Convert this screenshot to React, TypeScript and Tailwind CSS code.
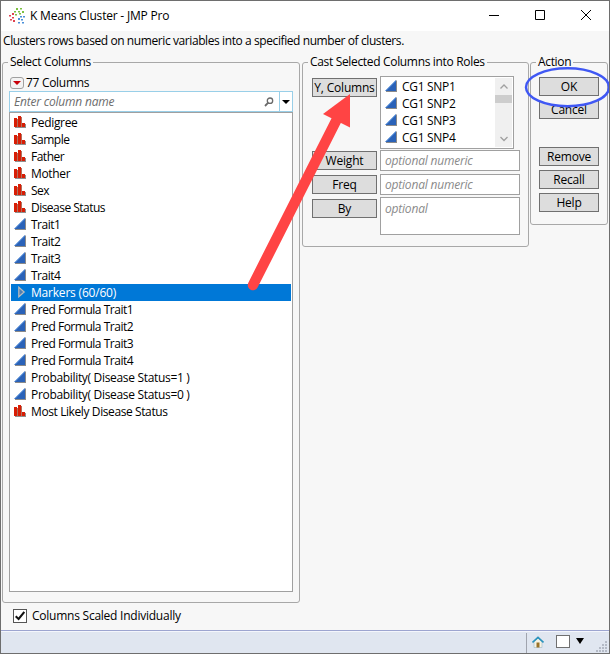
import { useState, ReactNode } from 'react';

type ColumnKind = 'nominal' | 'continuous' | 'group';

const columns: { name: string; kind: ColumnKind; spacing: string }[] = [
  { name: 'Pedigree', kind: 'nominal', spacing: 'tracking-[-0.35px]' },
  { name: 'Sample', kind: 'nominal', spacing: 'tracking-[-0.5px]' },
  { name: 'Father', kind: 'nominal', spacing: 'tracking-[-0.5px]' },
  { name: 'Mother', kind: 'nominal', spacing: 'tracking-[-0.35px]' },
  { name: 'Sex', kind: 'nominal', spacing: 'tracking-[-0.5px]' },
  { name: 'Disease Status', kind: 'nominal', spacing: 'tracking-[-0.53px]' },
  { name: 'Trait1', kind: 'continuous', spacing: 'tracking-[-0.5px]' },
  { name: 'Trait2', kind: 'continuous', spacing: 'tracking-[-0.5px]' },
  { name: 'Trait3', kind: 'continuous', spacing: 'tracking-[-0.5px]' },
  { name: 'Trait4', kind: 'continuous', spacing: 'tracking-[-0.5px]' },
  { name: 'Markers (60/60)', kind: 'group', spacing: 'tracking-[-0.2px]' },
  { name: 'Pred Formula Trait1', kind: 'continuous', spacing: 'tracking-[-0.48px]' },
  { name: 'Pred Formula Trait2', kind: 'continuous', spacing: 'tracking-[-0.48px]' },
  { name: 'Pred Formula Trait3', kind: 'continuous', spacing: 'tracking-[-0.48px]' },
  { name: 'Pred Formula Trait4', kind: 'continuous', spacing: 'tracking-[-0.48px]' },
  { name: 'Probability( Disease Status=1 )', kind: 'continuous', spacing: 'tracking-[-0.32px]' },
  { name: 'Probability( Disease Status=0 )', kind: 'continuous', spacing: 'tracking-[-0.32px]' },
  { name: 'Most Likely Disease Status', kind: 'nominal', spacing: 'tracking-[-0.4px]' },
];

const castColumns = ['CG1 SNP1', 'CG1 SNP2', 'CG1 SNP3', 'CG1 SNP4'];

function KindIcon({ kind }: { kind: ColumnKind }) {
  if (kind === 'nominal') {
    return (
      <svg className="w-3 h-3 mb-px shrink-0" viewBox="0 0 12 12" shapeRendering="crispEdges">
        <path fill="#8f8f8f" d="M1 11h11v1H1zM11 8h1v4h-1z" />
        <path fill="#b0705f" d="M3 3h1v8H3zM7 1h1v10H7z" />
        <path fill="#d81e05" d="M0 2h3v9H0zM4 0h3v11H4zM8 7h3v4H8z" />
      </svg>
    );
  }
  if (kind === 'continuous') {
    return (
      <svg className="w-3 h-3 mb-px shrink-0" viewBox="0 0 12 12">
        <path fill="#8a8a8a" d="M12 0v12H1v-1z" />
        <path fill="#2a62b8" d="M11 0v11H0z" />
        <path stroke="#6ca4e8" strokeWidth="0.8" d="M1 10.5L10.7 0.8" />
      </svg>
    );
  }
  return (
    <svg className="w-3 h-3 mb-px shrink-0" viewBox="0 0 12 12">
      <path fill="#4f80b4" stroke="#bdbdbd" strokeWidth="1.2" d="M4.8 1.2v9.600L10.200 6z" />
    </svg>
  );
}

function Group({ title, className, children }: { title: ReactNode; className: string; children: ReactNode }) {
  return (
    <fieldset className={`border border-[#a8a8a8] rounded-[3px] ${className}`}>
      <legend className="ml-[5px] px-[2px] h-4 leading-4 tracking-[-0.33px] whitespace-nowrap">{title}</legend>
      {children}
    </fieldset>
  );
}

function DialogButton({ label, className = '' }: { label: string; className?: string }) {
  return (
    <button
      className={`block h-[19px] bg-[#dddddd] border border-[#707070] leading-[17px] text-center whitespace-nowrap shrink-0 ${className}`}
    >
      {label}
    </button>
  );
}

export default function App() {
  const [selected, setSelected] = useState('Markers (60/60)');
  const [scaled, setScaled] = useState(true);

  return (
    <div className="relative w-[610px] h-[654px] overflow-hidden flex flex-col bg-[#f7f7f7] border border-[#6e6e6e] text-black text-[12px] tracking-[-0.2px] font-['Open_Sans','Noto_Sans',sans-serif]">
      {/* Title bar */}
      <div className="h-[30px] shrink-0 flex items-center bg-white pl-2">
        <svg className="w-4 h-4 mb-px" viewBox="0 0 16 16">
          <path fill="#e0414f" d="M3 5h2v2H3zM0 7h2v1.500H0zM3 9h2v1.500H3zM1 11h2v1.500H1zM4 12h2v2H4z" />
          <path fill="#7cc142" d="M7 0h2v2H7zM11 0h2v1.500h-2zM5 3h2v1.500H5zM9 3h2v1.500H9zM13 3h2v2h-2zM6 6h2v1.500H6zM10 5h2v1.500h-2z" />
          <path fill="#4a90d9" d="M11 8h2v1.500h-2zM14 8h2v1.500h-2zM9 10h2v2H9zM12 11h2v1.500h-2zM9 14h2v1.500H9zM13 14h2v1.500h-2z" />
        </svg>
        <h1 className="ml-[5px] text-[12px] tracking-[-0.2px] whitespace-nowrap">K Means Cluster - JMP Pro</h1>
        <div className="ml-auto mr-[18px] flex items-center gap-9">
          <svg className="w-[10px] h-[10px]" viewBox="0 0 10 10" shapeRendering="crispEdges">
            <path fill="#000" d="M0 4h10v1H0z" />
          </svg>
          <svg className="w-[10px] h-[10px] mb-[2px]" viewBox="0 0 10 10" fill="none" stroke="#000">
            <path d="M.5.5h9v9h-9z" />
          </svg>
          <svg className="w-[10px] h-[10px] mb-[2px]" viewBox="0 0 10 10" fill="none" stroke="#000">
            <path d="M0 0l10 10M10 0L0 10" />
          </svg>
        </div>
      </div>

      <p className="h-[23px] shrink-0 pl-[2px] leading-[19px] tracking-[-0.41px] whitespace-nowrap">
        Clusters rows based on numeric variables into a specified number of clusters.
      </p>

      <div className="flex items-start px-[1px]">
        {/* Select Columns */}
        <Group title="Select Columns" className="w-[298px] h-[549px]">
          <div className="px-[6px] pt-1">
            <div className="flex items-center h-[17px]">
              <button className="w-[14px] h-3 ml-[1px] rounded-[3px] border border-[#a0a0a0] bg-[#f3f3f3] flex items-center justify-center">
                <svg className="w-2 h-1" viewBox="0 0 8 4">
                  <path fill="#c8000a" d="M0 0h8L4 4z" />
                </svg>
              </button>
              <span className="ml-[2px] tracking-[-0.3px]">77 Columns</span>
            </div>
            <div className="h-[21px] flex items-center bg-white border border-[#99cfe8]">
              <input
                className="flex-1 min-w-0 pl-1 italic outline-none placeholder:text-[#6d6d6d]"
                placeholder="Enter column name"
              />
              <svg className="w-[10px] h-[10px] mr-[5px]" viewBox="0 0 10 10" fill="none" stroke="#6a6a6a">
                <circle cx="6" cy="3.700" r="2.700" strokeWidth="1.300" />
                <path strokeWidth="1.800" d="M4.200 5.700L1 9" />
              </svg>
              <div className="w-[13px] h-full border-l border-[#99cfe8] flex items-center justify-center">
                <svg className="w-2 h-1" viewBox="0 0 8 4">
                  <path fill="#000" d="M0 0h8L4 4z" />
                </svg>
              </div>
            </div>
            <ul className="h-[480px] bg-white border border-[#a0a0a0] p-[1px]">
              {columns.map((col) => (
                <li
                  key={col.name}
                  onClick={() => setSelected(col.name)}
                  className={`h-[17px] pl-[3px] flex items-center gap-[5px] leading-[17px] whitespace-nowrap ${
                    selected === col.name ? 'bg-[#0078d7] text-white' : ''
                  }`}
                >
                  <KindIcon kind={col.kind} />
                  <span className={col.spacing}>{col.name}</span>
                </li>
              ))}
            </ul>
          </div>
        </Group>

        {/* Roles */}
        <Group title="Cast Selected Columns into Roles" className="ml-[2px] w-[227px] h-[193px]">
          <div className="grid grid-cols-[65px_140px] gap-x-[3px] pl-[9px] pt-[6px]">
            <DialogButton label="Y, Columns" className="mt-[2px] w-[65px]" />
            <div className="h-[74px]">
              <div className="w-[134px] h-[73px] flex bg-white border border-[#a0a0a0] p-[1px]">
                <ul className="flex-1">
                  {castColumns.map((name) => (
                    <li key={name} className="h-[17px] pl-[3px] flex items-center gap-[5px] leading-[17px]">
                      <KindIcon kind="continuous" />
                      <span className="tracking-[-0.3px]">{name}</span>
                    </li>
                  ))}
                </ul>
                <div className="w-[17px] bg-[#f0f0f0] flex flex-col items-center">
                  <svg className="w-2 h-[17px]" viewBox="0 0 8 17" fill="none" stroke="#a0a0a0" strokeWidth="1.300">
                    <path d="M.5 10.500L4 7l3.500 3.500" />
                  </svg>
                  <div className="w-[17px] h-2 bg-[#cdcdcd]" />
                  <svg className="w-2 h-[17px] mt-auto" viewBox="0 0 8 17" fill="none" stroke="#a0a0a0" strokeWidth="1.300">
                    <path d="M.5 7L4 10.500 7.500 7" />
                  </svg>
                </div>
              </div>
            </div>
            <DialogButton label="Weight" className="mt-[1px] w-[65px]" />
            <div className="h-6">
              <input
                className="block w-full h-[21px] px-1 bg-white border border-[#a0a0a0] italic outline-none placeholder:text-[#8a8a8a]"
                placeholder="optional numeric"
              />
            </div>
            <DialogButton label="Freq" className="mt-[1px] w-[65px]" />
            <div className="h-[23px]">
              <input
                className="block w-full h-[21px] px-1 bg-white border border-[#a0a0a0] italic outline-none placeholder:text-[#8a8a8a]"
                placeholder="optional numeric"
              />
            </div>
            <DialogButton label="By" className="mt-[2px] w-[65px]" />
            <textarea
              className="block w-full h-[38px] px-1 pt-[2px] leading-[17px] bg-white border border-[#a0a0a0] italic outline-none resize-none placeholder:text-[#8a8a8a]"
              placeholder="optional"
            />
          </div>
        </Group>

        {/* Action */}
        <Group title="Action" className="ml-[1px] w-[78px] h-[171px]">
          <div className="flex flex-col gap-1 pl-2 pt-[7px]">
            <DialogButton label="OK" className="w-[60px]" />
            <DialogButton label="Cancel" className="w-[60px]" />
            <DialogButton label="Remove" className="w-[60px] mt-6" />
            <DialogButton label="Recall" className="w-[60px]" />
            <DialogButton label="Help" className="w-[60px]" />
          </div>
        </Group>
      </div>

      <label className="flex items-center h-[26px] pl-3 gap-[5px]">
        <input type="checkbox" className="sr-only" checked={scaled} onChange={() => setScaled(!scaled)} />
        <span className="w-[14px] h-[14px] bg-white border border-[#555] flex items-center justify-center">
          {scaled && (
            <svg className="w-[10px] h-[10px]" viewBox="0 0 10 10" fill="none" stroke="#111" strokeWidth="2">
              <path d="M.7 5.200L3.600 8 9.300 1" />
            </svg>
          )}
        </span>
        <span className="tracking-[-0.24px]">Columns Scaled Individually</span>
      </label>

      {/* Status bar */}
      <div className="mt-auto h-[23px] shrink-0 border-t border-[#9da5d0] bg-[#e0e6f0] flex flex-col">
        <div className="h-[1px] bg-[#f4f6fc]" />
        <div className="flex-1 flex items-center justify-end">
          <div className="w-[1px] h-5 bg-[#a0a4ae]" />
          <svg className="ml-[5px] mb-[2px] w-3 h-3" viewBox="0 0 12 12">
            <path fill="#f6f3e4" stroke="#a9bfca" strokeWidth="0.700" d="M2 5.500L6 2l4 3.500v6H2z" />
            <path fill="#9a7228" d="M4.500 6.500h3v5h-3z" />
            <path fill="none" stroke="#2b93bd" strokeWidth="1.700" d="M.5 6.500L6 1.300l5.500 5.200" />
          </svg>
          <div className="ml-3 mb-[2px] w-[14px] h-[13px] bg-white border border-[#707070]" />
          <svg className="ml-[6px] mb-[3px] mr-3 w-2 h-[6px]" viewBox="0 0 8 6">
            <path fill="#000" d="M0 0h8L4 6z" />
          </svg>
          <svg className="w-3 h-3 self-end mb-[1px] mr-[1px]" viewBox="0 0 12 12" shapeRendering="crispEdges">
            <path
              fill="#b4bac6"
              d="M9 1h2v2H9zM6 4h2v2H6zM9 4h2v2H9zM3 7h2v2H3zM6 7h2v2H6zM9 7h2v2H9zM0 10h2v2H0zM3 10h2v2H3zM6 10h2v2H6zM9 10h2v2H9z"
            />
          </svg>
        </div>
      </div>

      {/* Annotations drawn over the dialog */}
      <svg className="absolute -left-px -top-px w-[610px] h-[654px] pointer-events-none" viewBox="0 0 610 654">
        <path stroke="#ff4444" strokeWidth="10.500" strokeLinecap="round" d="M253 285L337 119" />
        <path fill="#ff4444" d="M350 94v33.500L323 114z" />
        <path fill="#f7f7f7" d="M534 98H601Q590 106.500 567.500 106.500T534 98z" />
        <ellipse cx="567.500" cy="87.300" rx="41.500" ry="19" fill="none" stroke="#4058f4" strokeWidth="2.500" />
      </svg>
    </div>
  );
}
